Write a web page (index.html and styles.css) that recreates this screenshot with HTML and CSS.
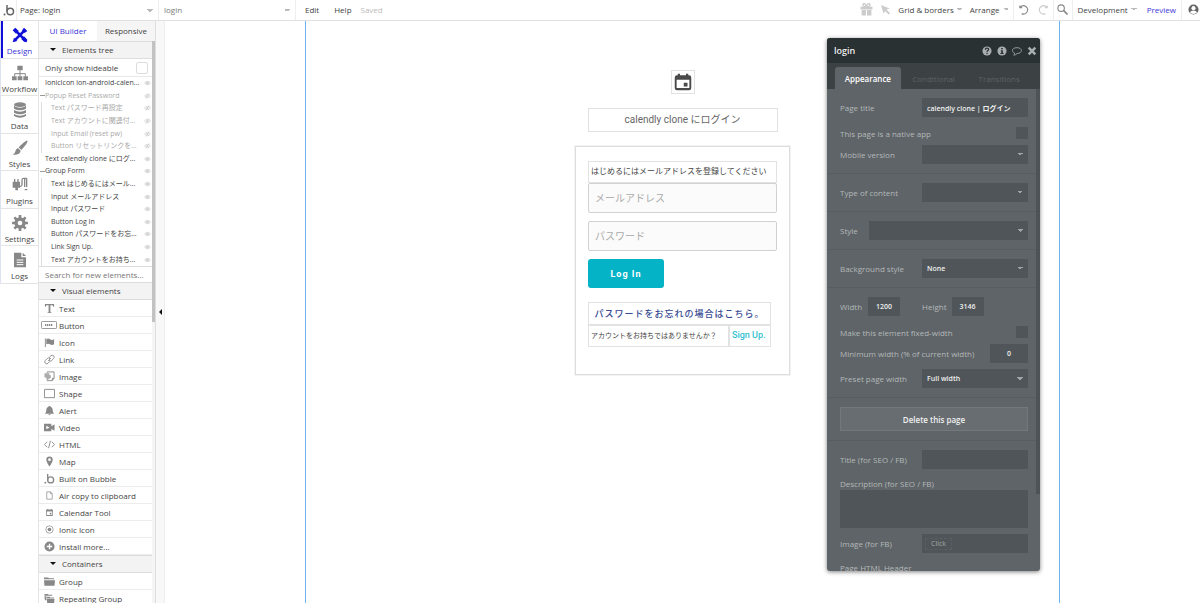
FILE: index.html
```html
<!DOCTYPE html>
<html lang="ja">
<head>
    <meta charset="UTF-8">
    <meta name="viewport" content="width=device-width, initial-scale=1.0">
    <title>login | Bubble Editor</title>
    <link rel="stylesheet" href="styles.css">
</head>
<body>
    <svg class="sprite" aria-hidden="true">
        <symbol id="eye" viewBox="0 0 16 12"><path d="M1 6Q8-2 15 6Q8 14 1 6Z" fill="none" stroke="currentColor" stroke-width="1.6"/><circle cx="8" cy="6" r="3" fill="currentColor"/></symbol>
        <symbol id="eye-off" viewBox="0 0 16 12"><path d="M1 6Q8-2 15 6Q8 14 1 6ZM4 12L12 0" fill="none" stroke="currentColor" stroke-width="1.6"/><circle cx="8" cy="6" r="2.4" fill="currentColor"/></symbol>
        <symbol id="bubble" viewBox="0 0 24 24"><path d="M8 2V15" fill="none" stroke="currentColor" stroke-width="3"/><circle cx="14.500" cy="15" r="6.500" fill="none" stroke="currentColor" stroke-width="3"/><circle cx="3" cy="21" r="2" fill="currentColor"/></symbol>
        <symbol id="calendar" viewBox="0 0 24 24"><path d="M5 1h3v2h8V1h3v2h1a3 3 0 0 1 3 3v14a3 3 0 0 1-3 3H4a3 3 0 0 1-3-3V6a3 3 0 0 1 3-3h1zM3.500 9v11h17V9zM13 13h5v5h-5z" fill="currentColor" fill-rule="evenodd"/></symbol>
    </svg>

    <header class="topbar">
        <a class="logo" href="#" aria-label="Bubble"><svg viewBox="0 0 24 24"><use href="#bubble"/></svg></a>
        <select class="page-select" aria-label="Page"><option>Page: login</option></select>
        <select class="element-select" aria-label="Element"><option>login</option></select>
        <div class="menu">
            <button>Edit</button>
            <button>Help</button>
            <span class="saved">Saved</span>
        </div>
        <div class="tools">
            <button class="tool gift" aria-label="Gift"><svg viewBox="0 0 24 24"><path d="M1 7h22v5H1zM3 13h8v10H3zM13 13h8v10h-8z" fill="currentColor"/><path d="M12 7C7 7 4 5 6 2s5 1 6 5c1-4 4-8 6-5s-1 5-6 5z" fill="none" stroke="currentColor" stroke-width="2.500"/></svg></button>
            <button class="tool cursor" aria-label="Pointer"><svg viewBox="0 0 24 24"><path d="M2 2l19 8-7 2 8 8-3 3-8-8-3 6z" fill="currentColor"/></svg></button>
            <button class="drop">Grid &amp; borders</button>
            <button class="drop">Arrange</button>
        </div>
        <div class="history">
            <button class="tool undo" aria-label="Undo"><svg viewBox="0 0 24 24"><path d="M4 3v5h5M5 7a9 9 0 1 1 3 14" fill="none" stroke="currentColor" stroke-width="2.500"/></svg></button>
            <button class="tool redo" aria-label="Redo"><svg viewBox="0 0 24 24"><path d="M20 3v5h-5M19 7a9 9 0 1 0-3 14" fill="none" stroke="currentColor" stroke-width="2.500"/></svg></button>
        </div>
        <button class="tool search" aria-label="Search"><svg viewBox="0 0 24 24"><circle cx="9" cy="9" r="7" fill="none" stroke="currentColor" stroke-width="2.500"/><path d="M14 14l9 9" stroke="currentColor" stroke-width="3.500"/></svg></button>
        <div class="deploy">
            <button class="drop">Development</button>
            <a class="preview" href="#">Preview</a>
        </div>
        <button class="tool user" aria-label="Account"><svg viewBox="0 0 24 24"><circle cx="12" cy="12" r="11" fill="currentColor"/><circle cx="12" cy="9" r="4.500" fill="#fff"/><path d="M4 18q3-4 8-4t8 4q-3 4-8 4t-8-4z" fill="#fff"/></svg></button>
    </header>

    <main class="editor">
        <nav class="nav">
            <a class="nav-item active" href="#"><svg viewBox="0 0 24 24"><path d="M4 4l16 16M20 4L4 20" stroke="currentColor" stroke-width="4"/><path d="M1 5l4-4 5 5-4 4zM14 18l4-4 5 5-1 4-4-1zM18 1l5 5-4 3-4-4zM1 23l2-7 5 5z" fill="currentColor"/></svg>Design</a>
            <a class="nav-item" href="#"><svg viewBox="0 0 24 24"><path d="M8 1h8v7H8zM0 17h7v6H0zM8.500 17h7v6h-7zM17 17h7v6h-7z" fill="currentColor"/><path d="M12 8v9M4 17v-4h16v4" fill="none" stroke="currentColor" stroke-width="1.500"/></svg>Workflow</a>
            <a class="nav-item" href="#"><svg viewBox="0 0 24 24"><ellipse cx="12" cy="4" rx="9" ry="3.500" fill="currentColor"/><path d="M3 6q9 5 18 0v4q-9 5-18 0zM3 12q9 5 18 0v4q-9 5-18 0zM3 18q9 5 18 0v3q-9 5-18 0z" fill="currentColor"/></svg>Data</a>
            <a class="nav-item" href="#"><svg viewBox="0 0 24 24"><path d="M23 1q2 2-9 14l-4-4Q21 0 23 1zM9 12l4 4q-1 7-12 6 4-1 4-5 1-4 4-5z" fill="currentColor"/></svg>Styles</a>
            <a class="nav-item" href="#"><svg viewBox="0 0 24 24"><path d="M1 7h2V3h2v4h3V3h2v4h2v9H9v4H5v-4H1z" fill="currentColor"/><path d="M12 14h1q2 0 2-3V5q0-3 2-3h5M19 2v13M22 2v13M19 19h4" fill="none" stroke="currentColor" stroke-width="2"/></svg>Plugins</a>
            <a class="nav-item" href="#"><svg viewBox="0 0 24 24"><circle cx="12" cy="12" r="6" fill="none" stroke="currentColor" stroke-width="5"/><path d="M12 0v5M12 19v5M0 12h5M19 12h5M3.500 3.500l4 4M16.500 16.500l4 4M3.500 20.500l4-4M16.500 7.500l4-4" stroke="currentColor" stroke-width="4"/></svg>Settings</a>
            <a class="nav-item" href="#"><svg viewBox="0 0 24 24"><path d="M3 1h11v7h7v15H3zM16 1l5 5h-5z" fill="currentColor"/><path d="M7 12h10M7 15.500h10M7 19h10" stroke="#fff" stroke-width="1.500"/></svg>Logs</a>
        </nav>

        <aside class="sidebar">
            <div class="side-tabs">
                <button class="side-tab active">UI Builder</button>
                <button class="side-tab">Responsive</button>
            </div>
            <div class="palette">
                <div class="palette-list">
                    <button class="section-title">Elements tree</button>
                    <label class="hideable">Only show hideable <input type="checkbox"></label>
                    <ul class="tree">
                        <li><span>IonicIcon ion-android-calen...</span><svg><use href="#eye"/></svg></li>
                        <li class="group hidden"><span>Popup Reset Password</span><svg><use href="#eye-off"/></svg></li>
                        <li class="child hidden"><span>Text パスワード再設定</span><svg><use href="#eye-off"/></svg></li>
                        <li class="child hidden"><span>Text アカウントに関連付...</span><svg><use href="#eye-off"/></svg></li>
                        <li class="child hidden"><span>Input Email (reset pw)</span><svg><use href="#eye-off"/></svg></li>
                        <li class="child hidden"><span>Button リセットリンクを...</span><svg><use href="#eye-off"/></svg></li>
                        <li><span>Text calendly clone にログ...</span><svg><use href="#eye"/></svg></li>
                        <li class="group"><span>Group Form</span><svg><use href="#eye"/></svg></li>
                        <li class="child"><span>Text はじめるにはメール...</span><svg><use href="#eye"/></svg></li>
                        <li class="child"><span>Input メールアドレス</span><svg><use href="#eye"/></svg></li>
                        <li class="child"><span>Input パスワード</span><svg><use href="#eye"/></svg></li>
                        <li class="child"><span>Button Log In</span><svg><use href="#eye"/></svg></li>
                        <li class="child"><span>Button パスワードをお忘...</span><svg><use href="#eye"/></svg></li>
                        <li class="child"><span>Link Sign Up.</span><svg><use href="#eye"/></svg></li>
                        <li class="child"><span>Text アカウントをお持ち...</span><svg><use href="#eye"/></svg></li>
                    </ul>
                    <input class="element-search" type="text" aria-label="Search for new elements" placeholder="Search for new elements...">
                    <button class="section-title">Visual elements</button>
                    <ul class="elements">
                        <li><svg viewBox="0 0 24 24"><path d="M2 2h20v6h-2l-1-3h-5v15l3 1v1H7v-1l3-1V5H5L4 8H2z" fill="currentColor"/></svg>Text</li>
                        <li><svg class="wide" viewBox="0 0 36 18"><rect x="1" y="1" width="34" height="16" rx="2" fill="none" stroke="currentColor" stroke-width="2"/><path d="M9 9h18" stroke="currentColor" stroke-width="4" stroke-dasharray="3 1.500"/></svg>Button</li>
                        <li><svg viewBox="0 0 24 24"><path d="M3 3v19" stroke="currentColor" stroke-width="2"/><path d="M5 5q4-3 8 0t9 0v11q-5 3-9 0t-8 0z" fill="currentColor"/></svg>Icon</li>
                        <li><svg viewBox="0 0 24 24"><path d="M9 15l6-6M11 8l4-4q3-3 6 0t0 6l-4 4q-3 3-6 0M13 16l-4 4q-3 3-6 0t0-6l4-4q3-3 6 0" fill="none" stroke="currentColor" stroke-width="2"/></svg>Link</li>
                        <li><svg viewBox="0 0 24 24"><path d="M7 4V2h15v14l-4 5H7v-3M18 21v-5h4" fill="none" stroke="currentColor" stroke-width="2"/><path d="M1 5h11v4h3v6h-3v3H5v-4H1z" fill="currentColor" opacity=".7"/></svg>Image</li>
                        <li><svg viewBox="0 0 24 24"><path d="M1 3h22v18H1z" fill="none" stroke="currentColor" stroke-width="2"/></svg>Shape</li>
                        <li><svg viewBox="0 0 24 24"><path d="M10 2h4v2q5 1 5 8 0 4 3 7H2q3-3 3-7 0-7 5-8zM9 20h6q-3 5-6 0z" fill="currentColor"/></svg>Alert</li>
                        <li><svg viewBox="0 0 24 24"><path d="M0 4h16v5l7-4v14l-7-4v5H0zM5 8v8l7-4z" fill="currentColor" fill-rule="evenodd"/></svg>Video</li>
                        <li><svg viewBox="0 0 24 24"><path d="M7 6l-6 6 6 6M17 6l6 6-6 6M14 4l-4 16" fill="none" stroke="currentColor" stroke-width="2"/></svg>HTML</li>
                        <li><svg viewBox="0 0 24 24"><path d="M12 23Q5 13 5 8a7 7 0 0 1 14 0q0 5-7 15zM12 5a3 3 0 1 0 0 6 3 3 0 1 0 0-6z" fill="currentColor" fill-rule="evenodd"/></svg>Map</li>
                        <li><svg viewBox="0 0 24 24"><use href="#bubble"/></svg>Built on Bubble</li>
                        <li><svg viewBox="0 0 24 24"><path d="M6 4h8l4 4v12H6zM14 4v4h4" fill="none" stroke="currentColor" stroke-width="1.500"/></svg>Air copy to clipboard</li>
                        <li><svg viewBox="-5 -5 34 34"><use href="#calendar" width="24" height="24"/></svg>Calendar Tool</li>
                        <li><svg viewBox="0 0 24 24"><circle cx="12" cy="12" r="8" fill="none" stroke="currentColor" stroke-width="1.500"/><circle cx="12" cy="12" r="4" fill="currentColor"/></svg>Ionic Icon</li>
                        <li><svg viewBox="0 0 24 24"><circle cx="12" cy="12" r="11" fill="currentColor"/><path d="M12 6v12M6 12h12" stroke="#fff" stroke-width="3"/></svg>Install more...</li>
                    </ul>
                    <button class="section-title">Containers</button>
                    <ul class="elements">
                        <li><svg viewBox="0 0 24 24"><path d="M0 7V3h9l2 2h11v2zM0 9h24l-1 12H1z" fill="currentColor"/></svg>Group</li>
                        <li><svg viewBox="0 0 24 24"><path d="M1 2h7l2 2h8v2H1zM1 7h4v9H2zM6 8h6l2 2h8v2H6zM6 13h17l-1 9H7z" fill="currentColor"/></svg>Repeating Group</li>
                    </ul>
                </div>
                <div class="scrollbar"><div class="thumb"></div></div>
            </div>
        </aside>
        <button class="collapse" aria-label="Collapse palette"></button>

        <section class="canvas">
            <div class="page">
                <div class="page-icon"><svg viewBox="0 0 24 24"><use href="#calendar"/></svg></div>
                <h1 class="page-title">calendly clone にログイン</h1>
                <form class="login-form">
                    <p class="intro">はじめるにはメールアドレスを登録してください</p>
                    <input class="field" type="text" aria-label="メールアドレス" placeholder="メールアドレス">
                    <input class="field second" type="text" aria-label="パスワード" placeholder="パスワード">
                    <button class="login-button" type="button">Log In</button>
                    <div class="form-links">
                        <button class="forgot" type="button">パスワードをお忘れの場合はこちら。</button>
                        <p class="no-account">アカウントをお持ちではありませんか？</p>
                        <a class="signup" href="#">Sign Up.</a>
                    </div>
                </form>
            </div>

            <div class="panel">
                <div class="panel-header">
                    <strong>login</strong>
                    <button aria-label="Help"><svg viewBox="0 0 24 24"><circle cx="12" cy="12" r="11" fill="currentColor"/><path d="M8 9q0-4 4-4t4 3q0 2-2 3t-2 3M12 16v3" fill="none" stroke="#2a3133" stroke-width="3"/></svg></button>
                    <button aria-label="Info"><svg viewBox="0 0 24 24"><circle cx="12" cy="12" r="11" fill="currentColor"/><path d="M10 5h4v3h-4zM9 10h5v7h2v2H8v-2h2v-5H9z" fill="#2a3133"/></svg></button>
                    <button aria-label="Comment"><svg viewBox="0 0 24 24"><path d="M12 4c14 0 14 14 0 14q-3 4-8 4 3-2 2-5C-3 13 0 4 12 4z" fill="none" stroke="currentColor" stroke-width="2"/></svg></button>
                    <button aria-label="Close"><svg viewBox="0 0 24 24"><path d="M4 4l16 16M20 4L4 20" stroke="currentColor" stroke-width="6"/></svg></button>
                </div>
                <div class="panel-tabs">
                    <button class="active">Appearance</button>
                    <button>Conditional</button>
                    <button>Transitions</button>
                </div>
                <div class="panel-body">
                    <div class="props">
                        <div class="group-box">
                            <div class="row"><label for="title">Page title</label><input id="title" class="half" type="text" value="calendly clone | ログイン"></div>
                            <div class="row check"><label for="native">This page is a native app</label><input id="native" type="checkbox"></div>
                            <div class="row"><label for="mobile">Mobile version</label><select id="mobile" class="half"><option></option></select></div>
                        </div>
                        <div class="group-box">
                            <div class="row"><label for="content">Type of content</label><select id="content" class="half"><option></option></select></div>
                        </div>
                        <div class="group-box">
                            <div class="row"><label for="style">Style</label><select id="style" class="long"><option></option></select></div>
                        </div>
                        <div class="group-box">
                            <div class="row"><label for="background">Background style</label><select id="background" class="half"><option>None</option></select></div>
                        </div>
                        <div class="group-box">
                            <div class="row size">
                                <label for="width">Width</label><input id="width" class="number" type="text" value="1200">
                                <label for="height">Height</label><input id="height" class="number" type="text" value="3146">
                            </div>
                            <div class="row check"><label for="fixed">Make this element fixed-width</label><input id="fixed" type="checkbox"></div>
                            <div class="row"><label for="minimum">Minimum width (% of current width)</label><input id="minimum" class="number minimum" type="text" value="0"></div>
                            <div class="row"><label for="preset">Preset page width</label><select id="preset" class="half"><option>Full width</option></select></div>
                        </div>
                        <div class="group-box">
                            <button class="delete">Delete this page</button>
                        </div>
                        <div class="group-box">
                            <div class="row"><label for="seo-title">Title (for SEO / FB)</label><input id="seo-title" class="half" type="text"></div>
                            <label class="block-label" for="seo-description">Description (for SEO / FB)</label>
                            <textarea id="seo-description"></textarea>
                            <div class="row"><label for="image">Image (for FB)</label><div class="half upload"><button id="image">Click</button></div></div>
                            <label class="block-label" for="html-header">Page HTML Header</label>
                            <textarea id="html-header"></textarea>
                        </div>
                    </div>
                    <div class="panel-scroll"><div class="panel-thumb"></div></div>
                </div>
            </div>
        </section>
    </main>
</body>
</html>
```

FILE: styles.css
```css
* {
    box-sizing: border-box;
}
body {
    margin: 0;
    height: 100vh;
    display: flex;
    flex-direction: column;
    overflow: hidden;
    background-color: white;
    color: #444;
    font-family: "Open Sans", "Noto Sans CJK JP", sans-serif;
    font-size: 8px;
}
button, input, select, textarea {
    font: inherit;
    color: inherit;
    margin: 0;
    padding: 0;
    border: none;
    border-radius: 0;
    background: none;
}
button {
    cursor: pointer;
}
a {
    color: inherit;
    text-decoration: none;
}
ul, p, h1 {
    margin: 0;
    padding: 0;
    list-style: none;
    font-weight: normal;
}
svg {
    display: block;
    flex-shrink: 0;
}
.sprite {
    display: none;
}

/* small down arrow on every drop-down */
select, .drop::after {
    --caret: #bbb;
    appearance: none;
    background-image: linear-gradient(to bottom left, var(--caret) 50%, transparent 50%), linear-gradient(to bottom right, var(--caret) 50%, transparent 50%);
    background-size: 3px 3px;
    background-position: right 8px center, right 5px center;
    background-repeat: no-repeat;
}

/* top bar */
.topbar {
    display: flex;
    align-items: stretch;
    height: 21px;
    flex-shrink: 0;
    border-bottom: 1px solid #e0e0e0;
}
.topbar select, .menu, .tools, .history, .deploy, .tool {
    padding-bottom: 2px;
}
.logo {
    width: 17px;
    padding: 4px 0 0 3px;
    border-right: 1px solid #eee;
    color: #666;
}
.logo svg {
    width: 12px;
    height: 12px;
}
.page-select, .element-select {
    width: 142px;
    padding-left: 3px;
    border-right: 1px solid #eee;
}
.element-select {
    width: 137px;
    padding-left: 5px;
    color: #777;
}
.menu {
    flex: 1;
    display: flex;
    align-items: center;
    gap: 15px;
    padding-left: 9px;
}
.saved {
    margin-left: -6px;
    color: #bbb;
}
.tools, .history, .deploy {
    display: flex;
    align-items: center;
    border-right: 1px solid #eee;
}
.tools {
    gap: 7px;
    padding-right: 4px;
}
.tool {
    display: flex;
    align-items: center;
    justify-content: center;
    color: #888;
}
.tools .tool, .history .tool {
    padding-bottom: 0;
}
.tool svg {
    width: 11px;
    height: 11px;
}
.gift svg {
    width: 13px;
    height: 13px;
}
.gift, .cursor, .redo {
    color: #ccc;
}
.drop {
    display: flex;
    align-items: center;
    gap: 3px;
}
.drop::after {
    content: "";
    width: 6px;
    height: 3px;
    background-position: 0 0, 3px 0;
}
.history {
    gap: 9px;
    padding-left: 4px;
    padding-right: 4px;
}
.search {
    width: 19px;
    border-right: 1px solid #eee;
}
.deploy {
    gap: 10px;
    padding-left: 5px;
    padding-right: 5px;
}
.preview {
    color: #3a35d8;
}
.user {
    width: 18px;
    padding-left: 4px;
    color: #666;
}

/* left navigation */
.editor {
    flex: 1;
    min-height: 0;
    display: flex;
}
.nav {
    width: 38px;
    flex-shrink: 0;
    display: grid;
    grid-template-rows: repeat(7, 1fr);
    align-self: flex-start;
    height: 263px;
    border-left: 1px solid #dde4f0;
}
.nav-item {
    display: flex;
    flex-direction: column;
    align-items: center;
    gap: 2px;
    padding-top: 6px;
    border-bottom: 1px solid #e4e4e4;
    line-height: 11px;
}
.nav-item svg {
    width: 16px;
    height: 16px;
    color: #888;
}
.nav-item.active {
    box-shadow: inset 2px 0 #1010d8;
    color: #3a35d8;
}
.nav-item.active svg {
    color: #1010d8;
}

/* palette */
.sidebar {
    width: 118px;
    flex-shrink: 0;
    display: flex;
    flex-direction: column;
    border-left: 1px solid #e4e4e4;
    border-right: 1px solid #ddd;
    overflow: hidden;
}
.side-tabs {
    display: flex;
    height: 20px;
    flex-shrink: 0;
}
.side-tab {
    flex: 1;
    padding-bottom: 1px;
    background-color: #f5f5f5;
}
.side-tab.active {
    background-color: white;
    color: #3a35d8;
}
.palette {
    flex: 1;
    min-height: 0;
    display: flex;
}
.palette-list {
    flex: 1;
    overflow: hidden;
}
.scrollbar {
    width: 3px;
    background-color: #f5f5f5;
}
.thumb {
    height: 50%;
    background-color: #c2c2c2;
}
.section-title {
    display: flex;
    align-items: center;
    gap: 6px;
    width: 100%;
    height: 18px;
    padding: 0 0 2px 11px;
    border-top: 1px solid #ddd;
    border-bottom: 1px solid #ddd;
    background-color: #f3f3f3;
}
.section-title::before {
    content: "";
    border: 3px solid transparent;
    border-top-color: #111;
    border-bottom: 0;
}
.hideable {
    display: flex;
    align-items: center;
    justify-content: space-between;
    height: 18px;
    padding: 0 4px 0 6px;
    border-bottom: 1px solid #e8e8e8;
}
input[type="checkbox"] {
    appearance: none;
    width: 12px;
    height: 12px;
}
.hideable input {
    border: 1px solid #ddd;
    border-radius: 2px;
}
.tree {
    display: grid;
    grid-template-rows: repeat(15, 1fr);
    height: 189px;
    font-size: 7px;
}
.tree li {
    display: flex;
    align-items: center;
    padding: 0 1px 0 6px;
    line-height: 12px;
    white-space: nowrap;
}
.tree span {
    flex: 1;
}
.tree svg {
    width: 7px;
    height: 6px;
    color: #ccc;
}
.tree .group {
    padding-left: 1px;
}
.tree .group::before {
    content: "";
    width: 5px;
    height: 1px;
    background-color: #999;
}
.tree .child {
    margin-left: 2px;
    padding-left: 9px;
    border-left: 1px solid #ddd;
}
.tree .hidden {
    color: #aaa;
}
.element-search {
    display: block;
    width: 100%;
    height: 16px;
    padding-left: 6px;
    border-top: 1px solid #ddd;
}
.element-search::placeholder {
    color: #777;
}
.elements li {
    display: flex;
    align-items: center;
    height: 17px;
    padding-left: 5px;
    border-bottom: 1px solid #ececec;
}
.elements svg {
    width: 11px;
    height: 11px;
    margin-right: 4px;
    color: #888;
}
.elements .wide {
    width: 16px;
    height: 8px;
    margin: 0 2px 0 -3px;
}
.collapse {
    width: 9px;
    flex-shrink: 0;
    display: flex;
    align-items: center;
    justify-content: center;
    border-right: 1px solid #eee;
    background-color: #f8f8f8;
}
.collapse::before {
    content: "";
    border: 3px solid transparent;
    border-right-color: #111;
    border-left: 0;
}

/* canvas */
.canvas {
    position: relative;
    flex: 1;
    overflow: hidden;
}
.page {
    display: flex;
    flex-direction: column;
    align-items: center;
    height: 100%;
    margin: 0 140px;
    padding-top: 49px;
    border-left: 1px solid #6fb1ea;
    border-right: 1px solid #6fb1ea;
    font-family: Roboto, "Noto Sans CJK JP", sans-serif;
}
.page-icon {
    padding: 2px;
    border: 1px solid #e2e2e2;
    color: #4a4a4a;
}
.page-icon svg {
    width: 18px;
    height: 18px;
}
.page-title {
    width: 190px;
    margin: 14px 0;
    border: 1px solid #e2e2e2;
    color: #666;
    font-size: 10px;
    line-height: 22px;
    text-align: center;
}
.login-form {
    width: 215px;
    padding: 14px 12px 27px;
    border: 1px solid #ddd;
    outline: 1px solid #f3f3f3;
}
.intro, .no-account {
    padding-left: 2px;
    border: 1px solid #e2e2e2;
    line-height: 20px;
    white-space: nowrap;
}
.no-account {
    font-size: 7px;
}
.field {
    display: block;
    width: 100%;
    height: 30px;
    padding-left: 6px;
    border: 1px solid #d2d2d2;
    border-radius: 2px;
    background-color: #fbfbfb;
    font-size: 10px;
}
.field::placeholder {
    color: #aaa;
}
.field.second {
    margin: 8px 0;
}
.login-button {
    display: block;
    width: 76px;
    height: 29px;
    border-radius: 3px;
    background-color: #05b3c7;
    color: white;
    font-size: 9px;
    font-weight: bold;
    letter-spacing: 1px;
}
.form-links {
    display: grid;
    grid-template-columns: 141px 42px;
    margin-top: 14px;
}
.forgot {
    grid-column: 1 / 3;
    height: 23px;
    border: 1px solid #e2e2e2;
    color: #374b91;
    font-size: 9px;
    font-weight: 500;
    letter-spacing: 1px;
    white-space: nowrap;
}
.signup {
    padding-left: 2px;
    border: 1px solid #e2e2e2;
    color: #35c1d0;
    font-size: 9px;
    font-weight: 500;
    line-height: 18px;
}

/* property editor */
.panel {
    position: absolute;
    top: 17px;
    right: 160px;
    bottom: 32px;
    width: 213px;
    display: flex;
    flex-direction: column;
    overflow: hidden;
    border-radius: 3px;
    background-color: #5e6467;
    box-shadow: 0 1px 4px rgba(0,0,0,0.5);
    color: #b4b8ba;
}
.panel-header {
    display: flex;
    align-items: center;
    gap: 5px;
    height: 25px;
    flex-shrink: 0;
    padding: 0 3px 0 7px;
    background-color: #2a3133;
}
.panel-header strong {
    flex: 1;
    color: #eee;
    font-size: 9px;
    font-weight: 600;
}
.panel-header button {
    color: #a8adaf;
}
.panel-header svg {
    width: 10px;
    height: 10px;
}
.panel-tabs {
    display: flex;
    height: 26px;
    flex-shrink: 0;
    padding: 4px 8px 0;
    background-color: #3c4143;
}
.panel-tabs button {
    flex: 1;
    color: #5d6366;
}
.panel-tabs .active {
    border-radius: 3px 3px 0 0;
    background-color: #5e6467;
    color: white;
    font-weight: 600;
}
.panel-body {
    flex: 1;
    min-height: 0;
    display: flex;
}
.props {
    flex: 1;
    overflow: hidden;
}
.panel-scroll {
    width: 4px;
}
.panel-thumb {
    height: 84%;
    background-color: #4d5356;
}
.group-box {
    padding: 9px 8px 9px 13px;
    border-bottom: 1px solid #575d60;
}
.row {
    display: flex;
    align-items: center;
    justify-content: space-between;
    height: 19px;
}
.row + .row {
    margin-top: 6px;
}
.row + .row.check {
    height: 12px;
    margin-top: 10px;
}
.panel-body input, .panel-body select, .panel-body textarea, .upload {
    background-color: #4f5558;
    color: #f0f0f0;
    font-size: 7px;
    font-weight: 600;
}
.panel-body select {
    --caret: #a0a5a7;
}
.panel-body .half {
    width: 106px;
    height: 19px;
    padding-left: 5px;
}
.panel-body .long {
    width: 159px;
    height: 19px;
}
.panel-body .number {
    width: 32px;
    height: 19px;
    text-align: center;
}
.panel-body .minimum {
    width: 38px;
}
.row.size {
    justify-content: flex-start;
    gap: 5px;
}
.size label:first-child {
    width: 23px;
}
.size input:nth-child(2) {
    margin-right: 17px;
}
.delete {
    width: 100%;
    height: 24px;
    border: 1px solid #72787b;
    background-color: #676d70;
    color: #f0f0f0;
    font-weight: 600;
}
.block-label {
    display: block;
    margin-top: 9px;
    line-height: 12px;
}
textarea {
    display: block;
    width: 100%;
    height: 38px;
    margin-bottom: 6px;
    resize: none;
}
.upload {
    display: flex;
    align-items: center;
}
.upload button {
    height: 12px;
    margin-left: -2px;
    padding: 0 5px;
    border: 1px dashed #596063;
    color: #a0a5a7;
    font-weight: normal;
}
```
